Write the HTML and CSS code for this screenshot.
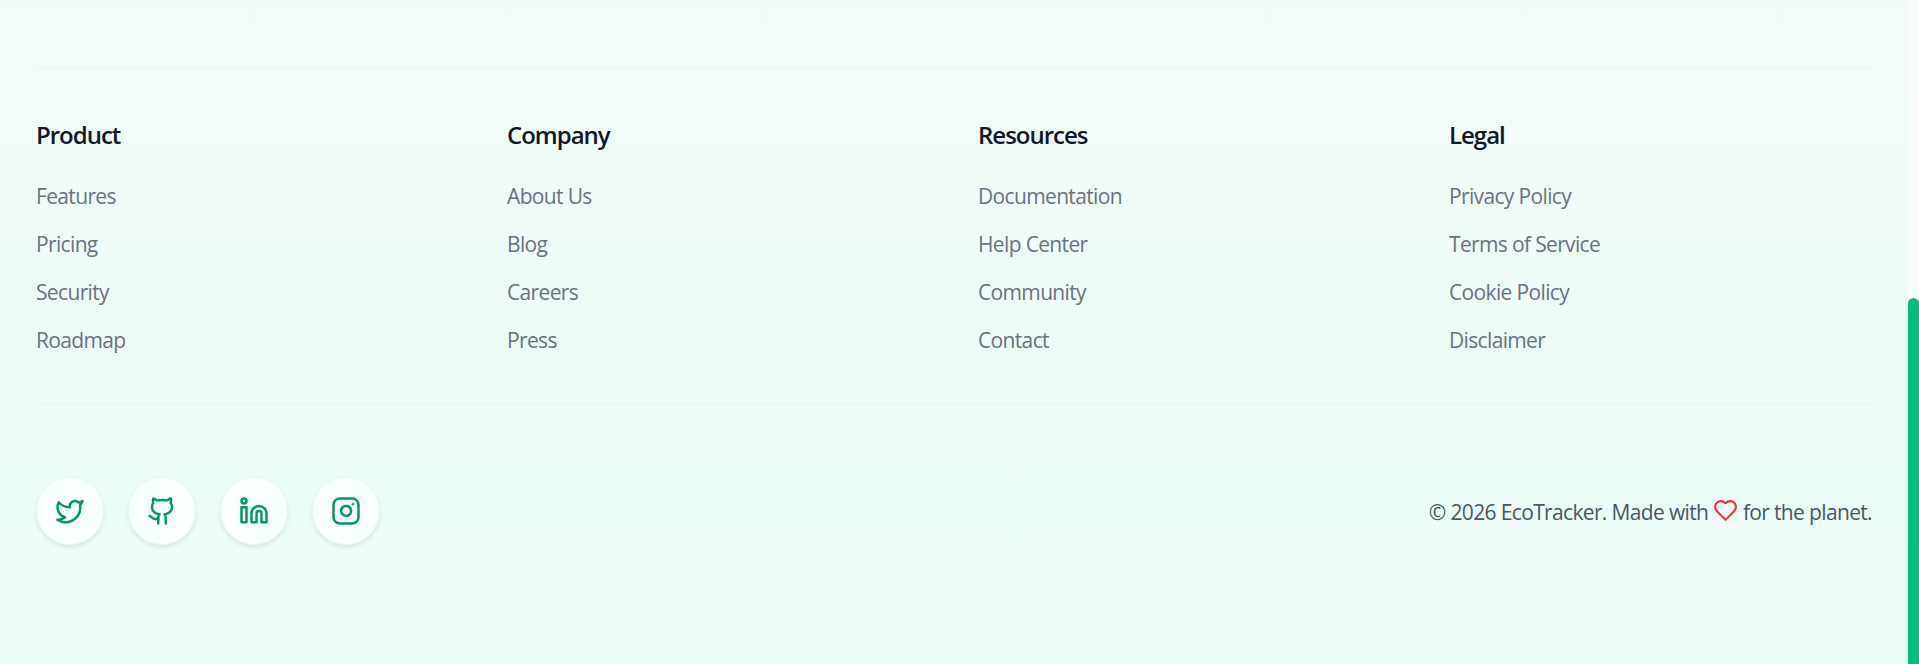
FILE: index.html
```html
<!DOCTYPE html>
<html lang="en">
<head>
  <meta charset="UTF-8">
  <title>EcoTracker</title>
  <link rel="stylesheet" href="styles.css">
</head>
<body>
<footer class="footer">
  <!-- Link columns -->
  <div class="footer-links">
    <div class="column">
      <h3>Product</h3>
      <ul>
        <li><a>Features</a></li>
        <li><a>Pricing</a></li>
        <li><a>Security</a></li>
        <li><a>Roadmap</a></li>
      </ul>
    </div>
    <div class="column">
      <h3>Company</h3>
      <ul>
        <li><a>About Us</a></li>
        <li><a>Blog</a></li>
        <li><a>Careers</a></li>
        <li><a>Press</a></li>
      </ul>
    </div>
    <div class="column">
      <h3>Resources</h3>
      <ul>
        <li><a>Documentation</a></li>
        <li><a>Help Center</a></li>
        <li><a>Community</a></li>
        <li><a>Contact</a></li>
      </ul>
    </div>
    <div class="column">
      <h3>Legal</h3>
      <ul>
        <li><a>Privacy Policy</a></li>
        <li><a>Terms of Service</a></li>
        <li><a>Cookie Policy</a></li>
        <li><a>Disclaimer</a></li>
      </ul>
    </div>
  </div>

  <!-- Social icons and copyright -->
  <div class="footer-bottom">
    <div class="social">
      <a class="social-link" aria-label="Twitter">
        <svg class="icon" viewBox="0 0 24 24"><path d="M22 4s-.7 2.1-2 3.4c1.6 10-9.4 17.3-18 11.6 2.2.1 4.4-.6 6-2C3 15.500.5 9.600 3 5c2.200 2.600 5.600 4.100 9 4-.9-4.200 4-6.600 7-3.800 1.100 0 3-1.200 3-1.200z"/></svg>
      </a>
      <a class="social-link" aria-label="GitHub">
        <svg class="icon" viewBox="0 0 24 24"><path d="M15 22v-4a4.8 4.8 0 0 0-1-3.500c3 0 6-2 6-5.500.08-1.250-.27-2.480-1-3.500.28-1.150.28-2.350 0-3.500 0 0-1 0-3 1.500-2.640-.5-5.360-.5-8 0C6 2 5 2 5 2c-.3 1.150-.3 2.350 0 3.500A5.403 5.403 0 0 0 4 9c0 3.500 3 5.500 6 5.500-.39.49-.68 1.050-.85 1.650-.17.6-.22 1.230-.15 1.850v4"/><path d="M9 18c-4.510 2-5-2-7-2"/></svg>
      </a>
      <a class="social-link" aria-label="LinkedIn">
        <svg class="icon" viewBox="0 0 24 24"><path d="M16 8a6 6 0 0 1 6 6v7h-4v-7a2 2 0 0 0-2-2 2 2 0 0 0-2 2v7h-4v-7a6 6 0 0 1 6-6z"/><rect width="4" height="12" x="2" y="9"/><circle cx="4" cy="4" r="2"/></svg>
      </a>
      <a class="social-link" aria-label="Instagram">
        <svg class="icon" viewBox="0 0 24 24"><rect width="20" height="20" x="2" y="2" rx="5" ry="5"/><path d="M16 11.370A4 4 0 1 1 12.630 8 4 4 0 0 1 16 11.370z"/><path d="M17.500 6.500h.01"/></svg>
      </a>
    </div>
    <p class="copyright">© 2026 EcoTracker. Made with <svg class="heart" viewBox="0 0 24 24"><path d="M19 14c1.490-1.460 3-3.210 3-5.500A5.500 5.500 0 0 0 16.500 3c-1.760 0-3 .5-4.500 2-1.500-1.500-2.740-2-4.500-2A5.500 5.500 0 0 0 2 8.500c0 2.300 1.500 4.050 3 5.500l7 7Z"/></svg> for the planet.</p>
  </div>
</footer>
<div class="scrollbar"><div class="thumb"></div></div>
</body>
</html>
```

FILE: styles.css
```css
* {
  box-sizing: border-box;
}

body {
  margin: 0;
  height: 664px;
  display: flex;
  overflow: hidden;
  font-family: "Segoe UI", "Open Sans", "Noto Sans", sans-serif;
  font-size: 21px;
  letter-spacing: -0.65px;
}

.footer {
  flex: 1;
  padding: 67px 36px 0;
  background: linear-gradient(to bottom, #f3fbf9, #effcf8 45%, #ecfcf6 80%, #ecfdf5);
}

/* Link columns */
.footer-links {
  display: grid;
  grid-template-columns: repeat(4, 1fr);
  gap: 48px;
  height: 338px;
  padding-top: 47px;
  border-top: 1px solid #e5f8f1;
  border-bottom: 1px solid #dff9ef;
}

h3 {
  margin: 0 0 23px;
  font-size: 24px;
  font-weight: 600;
  line-height: 40px;
  letter-spacing: -1px;
  color: #101828;
}

ul {
  margin: 0;
  padding: 0;
  list-style: none;
}

li {
  height: 36px;
  margin-bottom: 12px;
  line-height: 36px;
  color: #6a7282;
}

/* Bottom row */
.footer-bottom {
  display: flex;
  justify-content: space-between;
  align-items: center;
  padding-top: 72px;
}

.social {
  display: flex;
  gap: 24px;
}

.social-link {
  display: flex;
  align-items: center;
  justify-content: center;
  width: 68px;
  height: 68px;
  border: 1px solid #e6fbf2;
  border-radius: 50%;
  background: #f9fffc;
  box-shadow: 0 2px 4px rgba(0, 0, 0, 0.09);
}

.icon {
  width: 30px;
  height: 30px;
  fill: none;
  stroke: #009966;
  stroke-width: 2;
  stroke-linecap: round;
  stroke-linejoin: round;
}

.copyright {
  margin: 0;
  padding-top: 2px;
  line-height: 36px;
  color: #4a5565;
}

.heart {
  width: 25px;
  height: 25px;
  vertical-align: -3px;
  fill: none;
  stroke: #fb2c36;
  stroke-width: 2;
  stroke-linecap: round;
  stroke-linejoin: round;
}

/* Page scrollbar */
.scrollbar {
  display: flex;
  width: 11px;
  padding-top: 298px;
  background: #f8fafc;
}

.thumb {
  flex: 1;
  border-radius: 6px 6px 0 0;
  background: #00bc7d;
}
```
